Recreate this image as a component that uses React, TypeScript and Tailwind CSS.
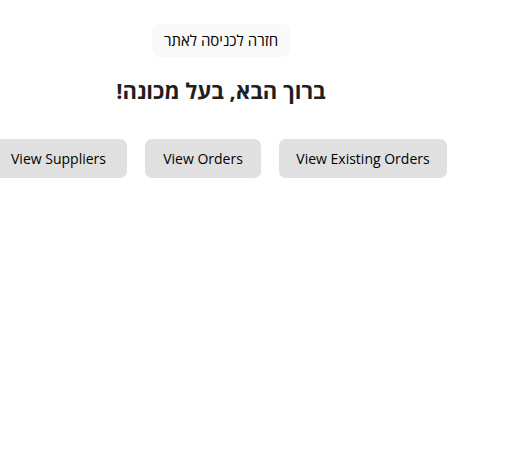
export default function App() {
  const font = { fontFamily: '"Open Sans", "Noto Sans", "DejaVu Sans", sans-serif' };
  return (
    <div className="w-[512px] h-[466px] bg-white text-[#1a1a1a] overflow-hidden" style={font}>
      <div className="w-[442px] flex flex-col items-center pt-[24px]">
        <button dir="rtl" className="h-[33px] w-[138px] whitespace-nowrap rounded-[8px] bg-[#f9f9f9] text-[15px] text-black">
          חזרה לכניסה לאתר
        </button>
        <h1 dir="rtl" className="mt-[19px] text-[22px] font-bold leading-[28px] text-[#1f1f1f] whitespace-nowrap">ברוך הבא, בעל מכונה!</h1>
      </div>
      <div className="w-[447px] flex justify-end gap-[18px] mt-[35px]">
        <button className="shrink-0 h-[39px] w-[137px] rounded-[7px] bg-[#e0e0e0] text-[14px] font-medium text-black">View Suppliers</button>
        <button className="shrink-0 h-[39px] w-[116px] rounded-[7px] bg-[#e0e0e0] text-[14px] font-medium text-black">View Orders</button>
        <button className="shrink-0 h-[39px] w-[168px] rounded-[7px] bg-[#e0e0e0] text-[14px] font-medium text-black">View Existing Orders</button>
      </div>
    </div>
  );
}
